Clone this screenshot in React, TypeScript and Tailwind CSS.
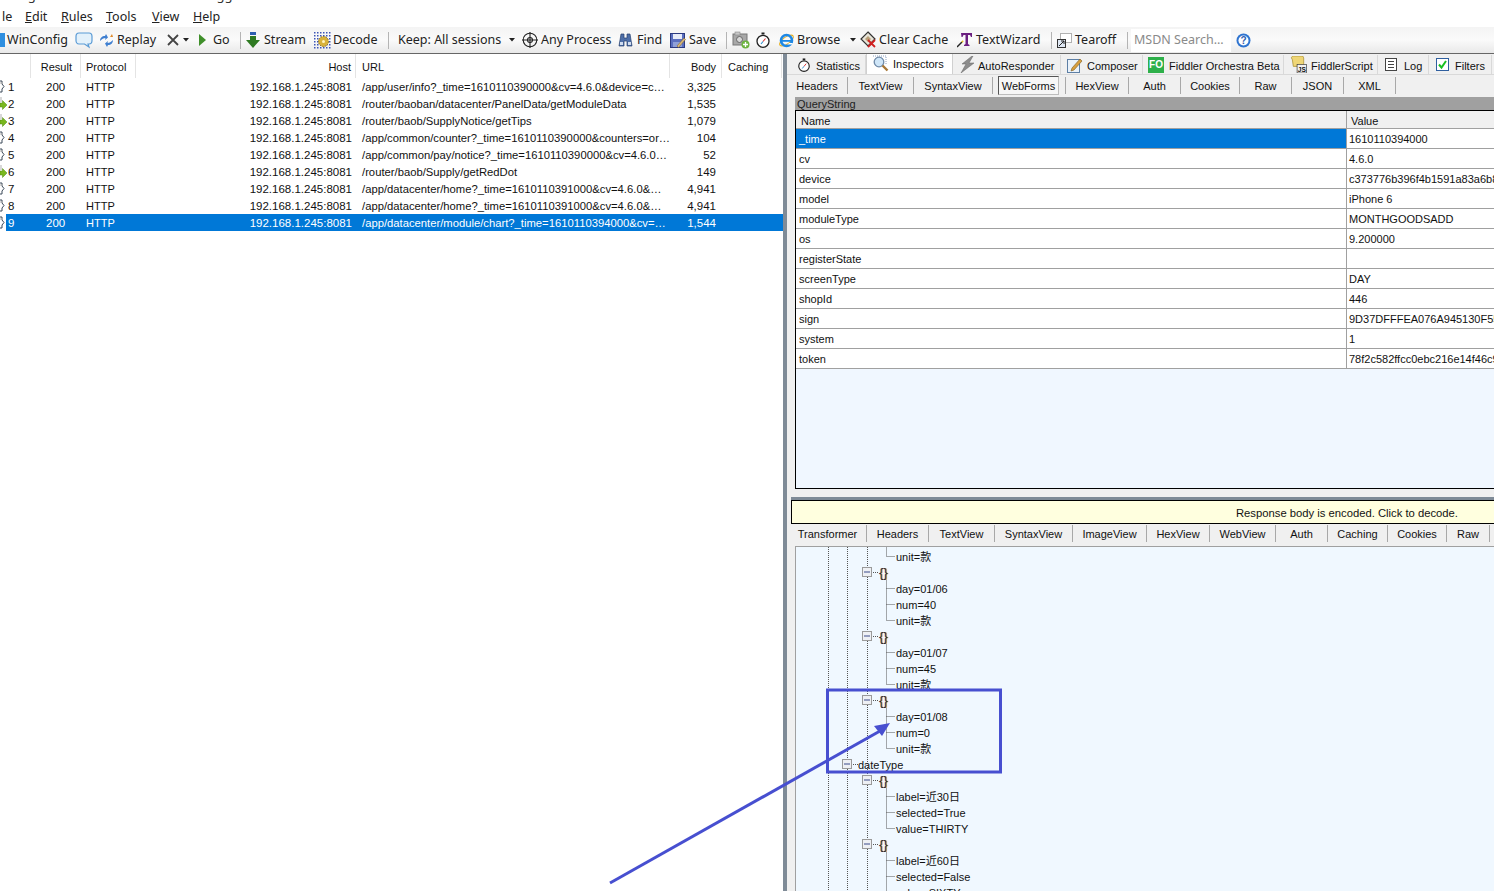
import type { ReactNode } from 'react';

const Bubble = () => (
  <svg width="18" height="18" viewBox="0 0 18 18" fill="none">
    <path d="M4 2h10c2 0 3 1.500 3 3.500v4c0 2-1 3.500-3 3.500h-1l1 3-4.500-3H4c-2 0-3-1.500-3-3.500v-4C1 3.500 2 2 4 2z" fill="#e3f1fb" stroke="#5b9bd5" strokeWidth="1.200" />
  </svg>
);
const Replay = () => (
  <svg width="15" height="15" viewBox="0 0 15 15" fill="none">
    <path d="M1 8c0-3 2-5 5-5l1-2 2 3.500L6 7l.5-2C4.500 5 3 6 1 8z" fill="#3f7fd0" />
    <path d="M14 7c0 3-2 5-5 5l-1 2-2-3.500L9 8l-.5 2c2 0 3.500-1 5.500-3z" fill="#3f7fd0" />
    <path d="M13 1l1 3-3 0z" fill="#e08a2a" />
  </svg>
);
const Play = () => (
  <svg width="9" height="12" viewBox="0 0 9 12"><path d="M1 0l7 6-7 6z" fill="#3f8f2a" /></svg>
);
const Caret = () => (
  <svg width="6" height="4" viewBox="0 0 6 4"><path d="M0 0h6L3 3.500z" fill="#222" /></svg>
);
const Stream = () => (
  <svg width="14" height="16" viewBox="0 0 14 16">
    <rect x="4" y="0" width="6" height="3" fill="#2f5fb0" />
    <path d="M4 4h6v4h4l-7 8-7-8h4z" fill="#2f7a22" />
  </svg>
);
const Decode = () => (
  <svg width="17" height="17" viewBox="0 0 17 17">
    {[0, 3, 6, 9, 12, 15].map((x) =>
      [0, 3, 6, 9, 12, 15].map((y) => <rect key={`${x}-${y}`} x={x} y={y} width="1.500" height="1.500" fill="#3c55b5" />),
    )}
    <circle cx="9.500" cy="9.500" r="5" fill="#d8b23c" stroke="#8a6d14" strokeDasharray="1.500 1" />
    <circle cx="9.500" cy="9.500" r="1.500" fill="#fff3c0" />
  </svg>
);
const Crosshair = () => (
  <svg width="16" height="16" viewBox="0 0 16 16" fill="none" stroke="#222" strokeWidth="1.100">
    <circle cx="8" cy="8" r="6.800" />
    <path d="M8 0v16M0 8h16" />
    <circle cx="8" cy="8" r="2.500" />
  </svg>
);
const Binoculars = () => (
  <svg width="15" height="14" viewBox="0 0 15 14">
    <path d="M3 1h3v4h3V1h3l2 12H9V8H6v5H1z" fill="#4d6ea8" stroke="#27406e" strokeWidth=".700" />
    <rect x="2" y="9" width="3" height="3" fill="#cfdcf0" />
    <rect x="10" y="9" width="3" height="3" fill="#cfdcf0" />
  </svg>
);
const Floppy = () => (
  <svg width="16" height="15" viewBox="0 0 16 15">
    <rect x=".500" y=".500" width="14" height="14" fill="#5a6fc0" stroke="#2c3a80" />
    <rect x="3" y="1" width="9" height="5" fill="#e8ecf8" />
    <rect x="3" y="9" width="9" height="5" fill="#8fa0d8" />
    <path d="M7 13l7-8 1.500 1.500-7 8z" fill="#d8b878" stroke="#7a5a20" strokeWidth=".500" />
  </svg>
);
const Camera = () => (
  <svg width="18" height="18" viewBox="0 0 18 18">
    <rect x="1" y="3" width="14" height="11" fill="#a8a8a8" stroke="#777" />
    <rect x="3" y="1" width="5" height="3" fill="#c8c8c8" stroke="#888" strokeWidth=".600" />
    <circle cx="7.500" cy="8.500" r="3" fill="#d8d8d8" stroke="#666" />
    <circle cx="13.500" cy="13.500" r="4" fill="#6db33f" />
    <path d="M13.500 11v5M11 13.500h5" stroke="#fff" strokeWidth="1.300" />
  </svg>
);
const Timer = ({ size = 16 }: { size?: number }) => (
  <svg width={size} height={size} viewBox="0 0 16 16" fill="none">
    <circle cx="8" cy="9.300" r="6" fill="#fff" stroke="#222" strokeWidth="1.300" />
    <rect x="6.500" y=".500" width="3" height="2" fill="#222" />
    <path d="M8 9.500l2.500-3" stroke="#d33" strokeWidth="1.100" />
    <path d="M8 9.500l-2 2.500" stroke="#2a8fd0" strokeWidth="1.100" />
  </svg>
);
const IeLogo = () => (
  <svg width="17" height="17" viewBox="0 0 17 17" fill="none">
    <ellipse cx="8.500" cy="8.500" rx="8" ry="3.500" transform="rotate(-35 8.500 8.500)" stroke="#e8b020" strokeWidth="1.100" />
    <circle cx="8.500" cy="8.500" r="5.500" stroke="#1e88e5" strokeWidth="2.600" />
    <path d="M3 8h11v1.800H3z" fill="#1e88e5" />
    <path d="M11 11h4l-1 1.500H10z" fill="#fff" />
  </svg>
);
const ClearCache = () => (
  <svg width="18" height="18" viewBox="0 0 18 18">
    <path d="M8 1l7 7-7 7-7-7z" fill="#e8e4d8" stroke="#333" strokeWidth="1.200" />
    <path d="M5 8l3-3 3 3-3 3z" fill="#b8a078" />
    <path d="M8 9l7 7M15 9l-7 7" stroke="#d02020" strokeWidth="1.800" />
  </svg>
);
const WizardT = () => (
  <svg width="16" height="16" viewBox="0 0 16 16">
    <path d="M4 1h11v4h-1l-1-2h-2v9l1.500 1v1H7v-1l1.500-1V3h-2l-1 2h-1z" fill="#6b1f80" />
    <path d="M0 15l5-5" stroke="#222" strokeWidth="1.500" />
    <path d="M5 9l1 1" stroke="#e8c020" strokeWidth="2" />
  </svg>
);
const Tearoff = () => (
  <svg width="15" height="15" viewBox="0 0 15 15" fill="none">
    <rect x="3.500" y=".500" width="11" height="9" fill="#fff" stroke="#666" strokeDasharray="1 1" />
    <rect x=".500" y="6.500" width="8" height="8" fill="#dfe8f4" stroke="#333" />
    <path d="M2 13l5-5M4 8h3v3" stroke="#222" />
  </svg>
);
const HelpIcon = () => (
  <svg width="15" height="15" viewBox="0 0 15 15">
    <circle cx="7.500" cy="7.500" r="7" fill="#2f74d0" />
    <circle cx="7.500" cy="7.500" r="5" fill="#fff" />
    <text x="7.500" y="11" textAnchor="middle" fontSize="10" fontWeight="700" fill="#2f5fb0" fontFamily="Liberation Sans">?</text>
  </svg>
);
const Magnifier = () => (
  <svg width="17" height="17" viewBox="0 0 17 17" fill="none">
    <path d="M1 1h13v9" stroke="#8ba0c0" strokeDasharray="1 1" />
    <circle cx="7" cy="7" r="4.800" fill="#cfe6f8" stroke="#6f8aa8" strokeWidth="1.300" />
    <path d="M10.500 10.500l5 5" stroke="#a87838" strokeWidth="2.400" />
  </svg>
);
const Bolt = () => (
  <svg width="15" height="17" viewBox="0 0 15 17"><path d="M12 0L2 8h4L1 17l13-10H9l4-7z" fill="#8c8c8c" stroke="#666" strokeWidth=".500" /></svg>
);
const Composer = () => (
  <svg width="16" height="16" viewBox="0 0 16 16" fill="none">
    <rect x=".500" y="2.500" width="12" height="13" fill="#eaf2fa" stroke="#5d7fa5" />
    <path d="M5 11l8-9 2 2-8 9-3 1z" fill="#d8a040" stroke="#7a5a20" strokeWidth=".600" />
  </svg>
);
const FoLogo = () => (
  <span className="w-4 h-4 shrink-0 flex items-center justify-center bg-[#2eb04a] text-white text-[10px] font-bold leading-none">FO</span>
);
const ScriptIcon = () => (
  <svg width="17" height="17" viewBox="0 0 17 18">
    <path d="M1 2c0-1 1-2 2-2h10l1 2v9H3L2 4z" fill="#efd676" stroke="#a08420" strokeWidth=".700" />
    <rect x="7" y="9" width="10" height="9" fill="#f2f2f2" stroke="#333" strokeWidth=".700" />
    <text x="12" y="16.500" textAnchor="middle" fontSize="7" fontWeight="700" fill="#111" fontFamily="Liberation Sans">JS</text>
  </svg>
);
const LogIcon = () => (
  <svg width="12" height="13" viewBox="0 0 12 13" fill="none" stroke="#444">
    <rect x=".500" y=".500" width="11" height="12" fill="#fff" />
    <path d="M3 3.500h6M3 6.500h6M3 9.500h6" />
  </svg>
);
const FilterCheck = () => (
  <svg width="13" height="13" viewBox="0 0 13 13" fill="none">
    <rect x=".500" y=".500" width="12" height="12" fill="#fff" stroke="#2f5f9f" />
    <path d="M3 6.500l2.500 3L10 3" stroke="#18c020" strokeWidth="2" />
  </svg>
);
const SessionJs = () => (
  <svg width="6" height="13" viewBox="0 0 6 13" fill="none">
    <path d="M0 1h2v3l2 2.500-2 2.500v3H0" stroke="#3c4a5a" />
    <path d="M0 3h3" stroke="#b0b0b0" />
  </svg>
);
const SessionArrow = () => (
  <svg width="7" height="13" viewBox="0 0 7 13">
    <path d="M0 0h2v5H0z" fill="#d8d8d8" />
    <path d="M0 6h2.500V3.500L7 8l-4.500 4.500V10H0z" fill="#7ab81e" stroke="#4f8a10" strokeWidth=".500" />
  </svg>
);

const ToolItem = ({ className, icon, gap, children }: { className: string; icon?: ReactNode; gap?: string; children?: ReactNode }) => (
  <div className={`flex items-center shrink-0 whitespace-nowrap ${className}`}>
    {icon}
    {children && <span className={gap}>{children}</span>}
  </div>
);
const ToolSep = ({ className }: { className: string }) => <div className={`w-px h-[17px] bg-[#b4b4b4] shrink-0 ${className}`} />;

const TopTab = ({ className, icon, label, textClass }: { className: string; icon: ReactNode; label: string; textClass: string }) => (
  <div className={`h-[20px] flex items-center shrink-0 border-r border-[#d9d9d9] whitespace-nowrap ${className}`}>
    {icon}
    <span className={`mt-[3px] ${textClass}`}>{label}</span>
  </div>
);

const SubTab = ({ className, label }: { className: string; label: string }) => (
  <div className={`h-[17px] flex items-center justify-center shrink-0 border-r border-[#a8a8a8] whitespace-nowrap ${className}`}>
    <span className="mt-[2px]">{label}</span>
  </div>
);

const sessions = [
  { n: 1, kind: 'js', url: '/app/user/info?_time=1610110390000&cv=4.6.0&device=c…', body: '3,325' },
  { n: 2, kind: 'go', url: '/router/baoban/datacenter/PanelData/getModuleData', body: '1,535' },
  { n: 3, kind: 'go', url: '/router/baob/SupplyNotice/getTips', body: '1,079' },
  { n: 4, kind: 'js', url: '/app/common/counter?_time=1610110390000&counters=or…', body: '104' },
  { n: 5, kind: 'js', url: '/app/common/pay/notice?_time=1610110390000&cv=4.6.0…', body: '52' },
  { n: 6, kind: 'go', url: '/router/baob/Supply/getRedDot', body: '149' },
  { n: 7, kind: 'js', url: '/app/datacenter/home?_time=1610110391000&cv=4.6.0&…', body: '4,941' },
  { n: 8, kind: 'js', url: '/app/datacenter/home?_time=1610110391000&cv=4.6.0&…', body: '4,941' },
  { n: 9, kind: 'js', url: '/app/datacenter/module/chart?_time=1610110394000&cv=…', body: '1,544' },
];

const params = [
  ['_time', '1610110394000'],
  ['cv', '4.6.0'],
  ['device', 'c373776b396f4b1591a83a6b8c2d41'],
  ['model', 'iPhone 6'],
  ['moduleType', 'MONTHGOODSADD'],
  ['os', '9.200000'],
  ['registerState', ''],
  ['screenType', 'DAY'],
  ['shopId', '446'],
  ['sign', '9D37DFFFEA076A945130F558C1B2'],
  ['system', '1'],
  ['token', '78f2c582ffcc0ebc216e14f46c90ab'],
];

type TreeRow = { kind: 'leaf' | 'obj' | 'group'; text?: string };
const tree: TreeRow[] = [
  { kind: 'leaf', text: 'unit=款' },
  { kind: 'obj' },
  { kind: 'leaf', text: 'day=01/06' },
  { kind: 'leaf', text: 'num=40' },
  { kind: 'leaf', text: 'unit=款' },
  { kind: 'obj' },
  { kind: 'leaf', text: 'day=01/07' },
  { kind: 'leaf', text: 'num=45' },
  { kind: 'leaf', text: 'unit=款' },
  { kind: 'obj' },
  { kind: 'leaf', text: 'day=01/08' },
  { kind: 'leaf', text: 'num=0' },
  { kind: 'leaf', text: 'unit=款' },
  { kind: 'group', text: 'dateType' },
  { kind: 'obj' },
  { kind: 'leaf', text: 'label=近30日' },
  { kind: 'leaf', text: 'selected=True' },
  { kind: 'leaf', text: 'value=THIRTY' },
  { kind: 'obj' },
  { kind: 'leaf', text: 'label=近60日' },
  { kind: 'leaf', text: 'selected=False' },
  { kind: 'leaf', text: 'value=SIXTY' },
];

const ExpandBox = () => (
  <svg width="10" height="10" viewBox="0 0 10 10" className="shrink-0 block">
    <rect x=".500" y=".500" width="9" height="9" fill="#eef0f4" stroke="#9a9a9a" />
    <path d="M2 5h6" stroke="#3a4a8a" />
  </svg>
);

// dotted guide lines of the tree view, coordinates are relative to the panel
const TreeGuides = () => {
  const dots = { stroke: '#555', strokeDasharray: '1 1', fill: 'none' };
  const rowY = (i: number) => 9.5 + i * 16;
  return (
    <svg className="absolute left-0 top-0" width="200" height="345">
      <path d="M32.500 0V345M51.500 0V345M71.500 0V345" {...dots} />
      {tree.map((r, i) => {
        if (r.kind === 'leaf') return <path key={i} d={`M90.500 ${rowY(i) - 16}V${rowY(i)}H99`} {...dots} />;
        if (r.kind === 'obj') return <path key={i} d={`M77 ${rowY(i)}H82`} {...dots} />;
        return <path key={i} d={`M57 ${rowY(i)}H62`} {...dots} />;
      })}
    </svg>
  );
};

export default function App() {
  return (
    <div className="relative w-[1494px] h-[891px] overflow-hidden bg-white text-[#111] text-[11px] font-['Liberation_Sans','Noto_Sans_CJK_SC',sans-serif]">
      {/* Title bar, only the bottom of it is on screen */}
      <div className="h-[16px] -mt-[13px] pl-[7px] leading-[16px] text-[13px] text-[#333] whitespace-nowrap font-['Noto_Sans',sans-serif]">Progress Telerik Fiddler Web Debugger</div>

      {/* Menu */}
      <div className="h-[24px] flex items-center pt-[4px] text-[12.5px] text-[#222] font-['Noto_Sans',sans-serif]">
        <span className="w-[25px] pl-[2px]">le</span>
        <span className="w-[36px]"><u>E</u>dit</span>
        <span className="w-[45px]"><u>R</u>ules</span>
        <span className="w-[46px]"><u>T</u>ools</span>
        <span className="w-[41px]"><u>V</u>iew</span>
        <span><u>H</u>elp</span>
      </div>

      {/* Toolbar */}
      <div className="h-[27px] flex items-center bg-gradient-to-b from-[#f4f4f4] via-[#fafafa] to-[#e9e9e9] border-b border-[#666] text-[12.5px] text-[#222] font-['Noto_Sans',sans-serif]">
        <ToolItem className="w-[75px]" gap="ml-[2px]" icon={<span className="w-[5px] h-[14px] bg-[#2f8fe0]" />}>WinConfig</ToolItem>
        <ToolItem className="w-[24px]" icon={<Bubble />} />
        <ToolItem className="w-[68px]" gap="ml-[3px]" icon={<Replay />}>Replay</ToolItem>
        <ToolItem className="w-[31px]" icon={<><svg width="12" height="12" viewBox="0 0 12 12"><path d="M1 1l10 10M11 1L1 11" stroke="#444" strokeWidth="1.800" /></svg><span className="ml-[4px]"><Caret /></span></>} />
        <ToolItem className="w-[42px]" gap="ml-[6px]" icon={<Play />}>Go</ToolItem>
        <ToolSep className="mr-[5px]" />
        <ToolItem className="w-[68px]" gap="ml-[4px]" icon={<Stream />}>Stream</ToolItem>
        <ToolItem className="w-[74px]" gap="ml-[2px]" icon={<Decode />}>Decode</ToolItem>
        <ToolSep className="mr-[9px]" />
        <ToolItem className="w-[111px]">Keep: All sessions</ToolItem>
        <ToolItem className="w-[13px]" icon={<Caret />} />
        <ToolItem className="w-[96px]" gap="ml-[3px]" icon={<Crosshair />}>Any Process</ToolItem>
        <ToolItem className="w-[52px]" gap="ml-[4px]" icon={<Binoculars />}>Find</ToolItem>
        <ToolItem className="w-[56px]" gap="ml-[3px]" icon={<Floppy />}>Save</ToolItem>
        <ToolSep className="mr-[5px]" />
        <ToolItem className="w-[23px]" icon={<Camera />} />
        <ToolItem className="w-[23px]" icon={<Timer />} />
        <ToolItem className="w-[72px]" gap="ml-[2px]" icon={<IeLogo />}>Browse</ToolItem>
        <ToolItem className="w-[10px]" icon={<Caret />} />
        <ToolItem className="w-[97px]" gap="ml-[1px]" icon={<ClearCache />}>Clear Cache</ToolItem>
        <ToolItem className="w-[94px]" gap="ml-[3px]" icon={<WizardT />}>TextWizard</ToolItem>
        <ToolSep className="mr-[5px]" />
        <ToolItem className="w-[70px]" gap="ml-[3px]" icon={<Tearoff />}>Tearoff</ToolItem>
        <ToolSep className="mr-[3px]" />
        <div className="w-[100px] h-[23px] mr-[5px] flex items-center pl-[3px] bg-white text-[#8a8a8a] shrink-0 whitespace-nowrap">MSDN Search...</div>
        <HelpIcon />
      </div>

      <div className="flex h-[837px]">
        {/* Sessions */}
        <div className="w-[783px] shrink-0 overflow-hidden">
          <div className="h-[24px] flex">
            <div className="w-[31px] border-r border-[#e4e4e4]" />
            <div className="w-[50px] border-r border-[#e4e4e4] pr-[8px] pt-[2px] flex items-center justify-end">Result</div>
            <div className="w-[55px] border-r border-[#e4e4e4] pl-[5px] pt-[2px] flex items-center">Protocol</div>
            <div className="w-[220px] border-r border-[#e4e4e4] pr-[4px] pt-[2px] flex items-center justify-end">Host</div>
            <div className="w-[314px] border-r border-[#e4e4e4] pl-[6px] pt-[2px] flex items-center">URL</div>
            <div className="w-[52px] border-r border-[#e4e4e4] pr-[5px] pt-[2px] flex items-center justify-end">Body</div>
            <div className="w-[60px] border-r border-[#e4e4e4] pl-[6px] pt-[2px] flex items-center">Caching</div>
          </div>
          {sessions.map((s) => (
            <div key={s.n} className="h-[17px] flex items-center whitespace-nowrap">
              <div className="w-[6px] shrink-0">{s.kind === 'go' ? <SessionArrow /> : <SessionJs />}</div>
              <div className={`flex flex-1 h-full items-center pt-[2px] text-[11.5px] ${s.n === 9 ? 'bg-[#0078d7] text-white' : ''}`}>
                <div className="w-[25px] pl-[2px]">{s.n}</div>
                <div className="w-[50px] pl-[15px]">200</div>
                <div className="w-[55px] pl-[5px] text-[11px]">HTTP</div>
                <div className="w-[220px] pr-[4px] text-right">192.168.1.245:8081</div>
                <div className="w-[315px] pl-[6px] overflow-hidden text-[11.25px]">{s.url}</div>
                <div className="w-[51px] pr-[6px] text-right">{s.body}</div>
              </div>
            </div>
          ))}
        </div>

        {/* Splitter */}
        <div className="w-[4px] shrink-0 bg-[#7f8b97]" />

        {/* Inspectors */}
        <div className="flex-1 min-w-0 flex flex-col bg-[#f0f0f0] overflow-hidden">
          <div className="h-[21px] flex items-center border-b border-[#d9d9d9] pt-px">
            <div className="w-[5px] shrink-0" />
            <TopTab className="w-[74px] pl-[5px]" icon={<Timer size={14} />} label="Statistics" textClass="ml-[5px]" />
            <div className="w-[87px] h-[22px] -mt-[3px] shrink-0 flex items-center pl-[5px] bg-white border border-b-0 border-[#d0d0d0] whitespace-nowrap">
              <Magnifier />
              <span className="ml-[4px] mt-[1px]">Inspectors</span>
            </div>
            <TopTab className="w-[108px] pl-[7px]" icon={<Bolt />} label="AutoResponder" textClass="ml-[3px]" />
            <TopTab className="w-[82px] pl-[6px]" icon={<Composer />} label="Composer" textClass="ml-[4px]" />
            <TopTab className="w-[141px] pl-[5px]" icon={<FoLogo />} label="Fiddler Orchestra Beta" textClass="ml-[5px]" />
            <TopTab className="w-[94px] pl-[6px]" icon={<ScriptIcon />} label="FiddlerScript" textClass="ml-[4px]" />
            <TopTab className="w-[51px] pl-[7px]" icon={<LogIcon />} label="Log" textClass="ml-[7px]" />
            <TopTab className="w-[63px] pl-[7px]" icon={<FilterCheck />} label="Filters" textClass="ml-[6px]" />
          </div>

          <div className="h-[22px] flex items-center pb-[2px]">
            <SubTab className="w-[61px]" label="Headers" />
            <SubTab className="w-[66px]" label="TextView" />
            <SubTab className="w-[79px]" label="SyntaxView" />
            <div className="w-[5px] shrink-0" />
            <div className="w-[61px] h-[19px] shrink-0 flex items-center justify-center border border-[#bdbdbd] border-l-[#555] border-t-[#555] bg-[#f7f7f7] whitespace-nowrap pt-[2px]">WebForms</div>
            <div className="w-[7px] h-[17px] shrink-0 border-r border-[#a8a8a8]" />
            <SubTab className="w-[63px]" label="HexView" />
            <SubTab className="w-[52px]" label="Auth" />
            <SubTab className="w-[59px]" label="Cookies" />
            <SubTab className="w-[52px]" label="Raw" />
            <SubTab className="w-[52px]" label="JSON" />
            <SubTab className="w-[52px]" label="XML" />
          </div>

          {/* Request pane */}
          <div className="ml-[8px] flex flex-col h-[392px] shrink-0">
            <div className="h-[13px] bg-[#a0a0a0] pl-[2px] leading-[15px] text-[#222] overflow-hidden">QueryString</div>
            <div className="flex-1 border border-black border-r-0 bg-[#f0f7ff] overflow-hidden">
              <div className="h-[18px] flex bg-[#f0f0f0] border-b border-[#a0a0a0]">
                <div className="w-[551px] shrink-0 pl-[5px] pt-[3px] border-r border-[#a0a0a0] flex items-center">Name</div>
                <div className="pl-[4px] pt-[3px] flex items-center">Value</div>
              </div>
              {params.map(([name, value], i) => (
                <div key={name} className="h-[20px] flex border-b border-[#a0a0a0] bg-white whitespace-nowrap">
                  <div className={`w-[551px] shrink-0 pl-[3px] pt-[2px] border-r border-[#a0a0a0] flex items-center ${i === 0 ? 'bg-[#0078d7] text-white' : ''}`}>{name}</div>
                  <div className="pl-[2px] pt-[2px] flex items-center">{value}</div>
                </div>
              ))}
            </div>
          </div>

          <div className="h-[8px] shrink-0 bg-[#f0f0f0]" />
          <div className="h-[3px] shrink-0 ml-[4px] bg-[#7f8b97]" />

          {/* Response pane */}
          <div className="h-[24px] shrink-0 ml-[4px] flex items-center justify-end pr-[36px] pt-[2px] bg-[#ffffdf] border-y border-l border-black whitespace-nowrap text-[11.25px]">Response body is encoded. Click to decode.</div>
          <div className="h-[22px] shrink-0 flex items-center pb-[4px]">
            <SubTab className="w-[80px] pl-[2px]" label="Transformer" />
            <SubTab className="w-[62px]" label="Headers" />
            <SubTab className="w-[66px]" label="TextView" />
            <SubTab className="w-[78px]" label="SyntaxView" />
            <SubTab className="w-[74px]" label="ImageView" />
            <SubTab className="w-[63px]" label="HexView" />
            <SubTab className="w-[66px]" label="WebView" />
            <SubTab className="w-[52px]" label="Auth" />
            <SubTab className="w-[60px]" label="Caching" />
            <SubTab className="w-[59px]" label="Cookies" />
            <SubTab className="w-[43px]" label="Raw" />
          </div>
          <div className="relative flex-1 ml-[8px] bg-[#f0f8ff] border-t border-l border-[#a0a0a0] pt-px overflow-hidden whitespace-nowrap text-[#111]">
            <TreeGuides />
            {tree.map((r, i) => (
              <div key={i} className="relative h-[16px] flex items-center">
                {r.kind === 'leaf' && <span className="ml-[100px] mt-[2px]">{r.text}</span>}
                {r.kind === 'obj' && (
                  <>
                    <span className="ml-[66px]"><ExpandBox /></span>
                    <span className="ml-[7px] text-[#1c2340] text-[13px] leading-none [text-shadow:1px_0_0_#e8a040]">{'{}'}</span>
                  </>
                )}
                {r.kind === 'group' && (
                  <>
                    <span className="ml-[46px]"><ExpandBox /></span>
                    <span className="ml-[6px] mt-[2px]">{r.text}</span>
                  </>
                )}
              </div>
            ))}
          </div>
        </div>
      </div>

      {/* Annotation drawn over the screenshot */}
      <svg className="absolute left-0 top-0 pointer-events-none" width="1494" height="891">
        <rect x="827.500" y="690" width="173" height="82" fill="none" stroke="#474fd0" strokeWidth="3" />
        <path d="M610 883L880 731" stroke="#474fd0" strokeWidth="3" />
        <path d="M890 723L874 726L882 736z" fill="#474fd0" />
      </svg>
    </div>
  );
}
